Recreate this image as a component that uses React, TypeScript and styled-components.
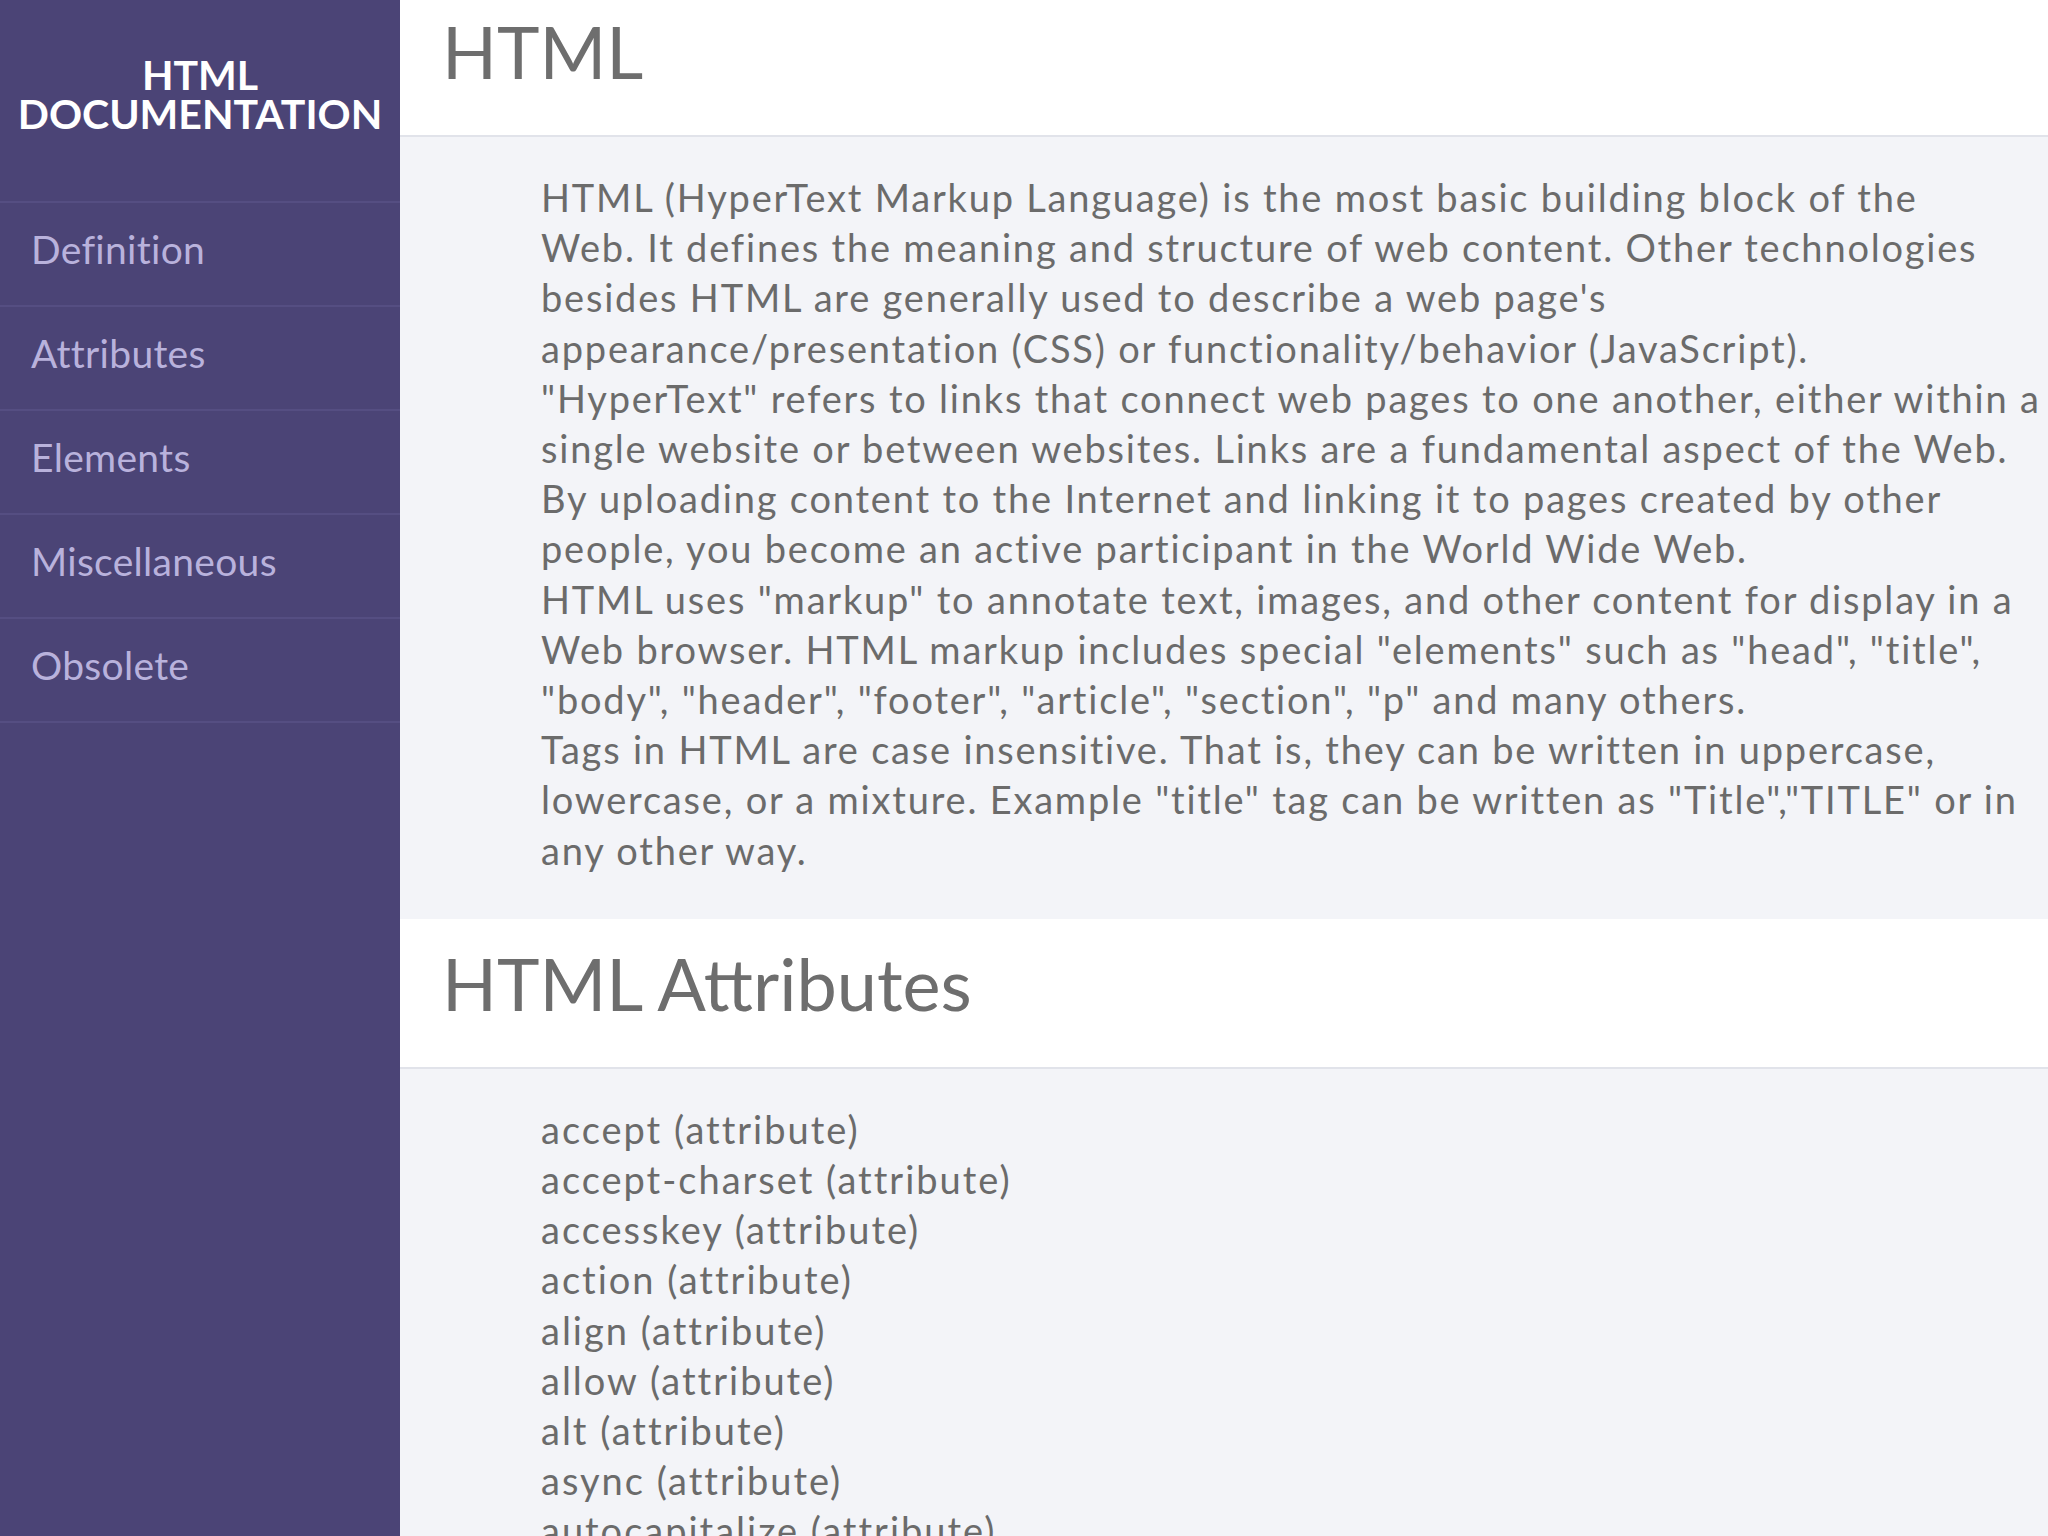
import styled, { createGlobalStyle } from "styled-components"

const GlobalStyle = createGlobalStyle`
  * {
    box-sizing: border-box;
  }
  html,
  body {
    margin: 0;
    padding: 0;
  }
  body {
    font-family: Lato, "Open Sans", sans-serif;
    color: #6b6b6b;
    background: #f3f4f8;
  }
`

const navItems = [
  "Definition",
  "Attributes",
  "Elements",
  "Miscellaneous",
  "Obsolete"
]

const attributes = [
  "accept",
  "accept-charset",
  "accesskey",
  "action",
  "align",
  "allow",
  "alt",
  "async",
  "autocapitalize",
  "autocomplete",
  "autofocus"
]

// line breaks kept as in the original page
const paragraphs = [
  [
    `HTML (HyperText Markup Language) is the most basic building block of the`,
    `Web. It defines the meaning and structure of web content. Other technologies`,
    `besides HTML are generally used to describe a web page's`,
    `appearance/presentation (CSS) or functionality/behavior (JavaScript).`
  ],
  [
    `"HyperText" refers to links that connect web pages to one another, either within a`,
    `single website or between websites. Links are a fundamental aspect of the Web.`,
    `By uploading content to the Internet and linking it to pages created by other`,
    `people, you become an active participant in the World Wide Web.`
  ],
  [
    `HTML uses "markup" to annotate text, images, and other content for display in a`,
    `Web browser. HTML markup includes special "elements" such as "head", "title",`,
    `"body", "header", "footer", "article", "section", "p" and many others.`
  ],
  [
    `Tags in HTML are case insensitive. That is, they can be written in uppercase,`,
    `lowercase, or a mixture. Example "title" tag can be written as "Title","TITLE" or in`,
    `any other way.`
  ]
]

const App = () => {
  return (
    <>
      <GlobalStyle />
      <Layout>
        <Sidebar>
          <Brand>
            HTML
            <br />
            Documentation
          </Brand>
          <NavList>
            {navItems.map((item) => (
              <NavItem key={item}>
                <NavLink href={`#${item}`}>{item}</NavLink>
              </NavItem>
            ))}
          </NavList>
        </Sidebar>
        <Main>
          <Section id="Definition">
            <SectionHeader $first>HTML</SectionHeader>
            <SectionBody>
              {paragraphs.map((lines, i) => (
                <Paragraph key={i}>{lines.join("\n")}</Paragraph>
              ))}
            </SectionBody>
          </Section>
          <Section id="Attributes">
            <SectionHeader>HTML Attributes</SectionHeader>
            <SectionBody>
              <AttrList>
                {attributes.map((a) => (
                  <li key={a}>{a} (attribute)</li>
                ))}
              </AttrList>
            </SectionBody>
          </Section>
        </Main>
      </Layout>
    </>
  )
}

const Layout = styled.div`
  display: grid;
  grid-template-columns: 400px 1fr;
  height: 1536px;
  overflow: hidden;
`

const Sidebar = styled.nav`
  background-color: #4b4476;
  display: flex;
  flex-direction: column;
`

const Brand = styled.header`
  height: 201px;
  display: flex;
  align-items: center;
  justify-content: center;
  text-align: center;
  padding-bottom: 14px;
  color: #fff;
  font-size: 41px;
  font-weight: 700;
  line-height: 39px;
  text-transform: uppercase;
`

const NavList = styled.ul`
  list-style: none;
  margin: 0;
  padding: 0;
  border-bottom: 2px solid #554e82;
`

const NavItem = styled.li`
  border-top: 2px solid #554e82;
`

const NavLink = styled.a`
  display: flex;
  align-items: center;
  height: 102px;
  padding: 0 0 10px 31px;
  color: #b9b2dc;
  font-size: 39px;
  letter-spacing: 0.3px;
  text-decoration: none;
`

const Main = styled.main`
  display: flex;
  flex-direction: column;
  overflow: hidden;
`

const Section = styled.section`
  display: flex;
  flex-direction: column;
`

const SectionHeader = styled.header<{ $first?: boolean }>`
  background-color: #fff;
  border-bottom: 2px solid #e1e3ea;
  padding: ${({ $first }) => ($first ? "15px" : "28px")} 35px 48px 42px;
  font-size: 72px;
  line-height: 72px;
  color: #6e6e6e;
`

const SectionBody = styled.div`
  padding: 35px 0 44px 141px;
  font-size: 38px;
  line-height: 50.2px;
  letter-spacing: 1.8px;
`

const Paragraph = styled.p`
  margin: 0;
  white-space: pre;
`

const AttrList = styled.ul`
  list-style: none;
  margin: 0;
  padding: 0;
  letter-spacing: 2px;
`

export default App
